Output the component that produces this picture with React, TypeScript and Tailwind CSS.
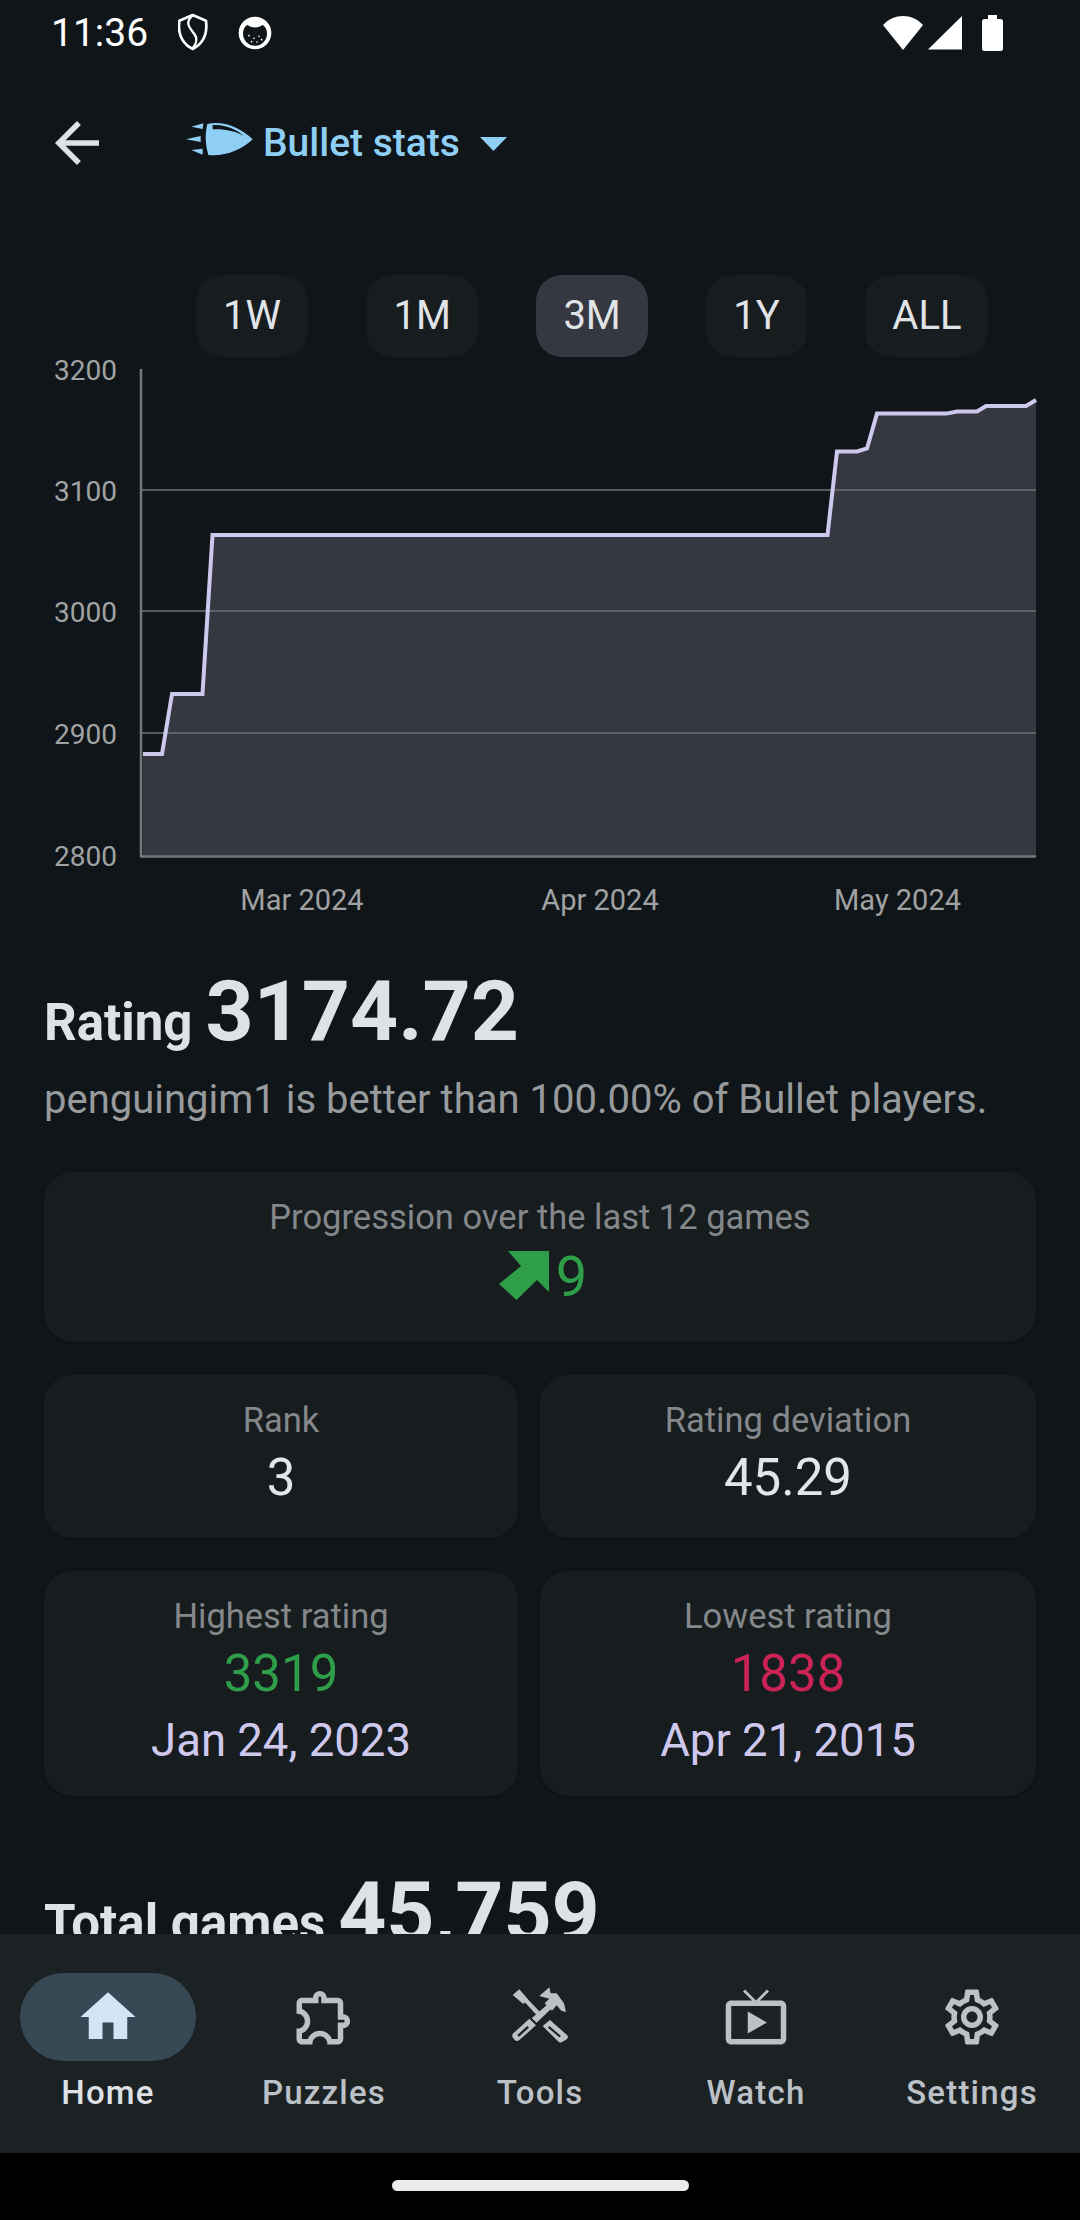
import React from 'react';

const ranges = [
  { label: '1W', active: false },
  { label: '1M', active: false },
  { label: '3M', active: true },
  { label: '1Y', active: false },
  { label: 'ALL', active: false },
];

const linePoints =
  '143,754 162,754 172,694 202.5,694 212.5,535 827.5,535 837,451.5 857,451.5 867,448.5 877,413.6 946,413.6 957,411.5 977,411.5 986,406 1026,406 1036,400';

const StatusBar = () => (
  <div className="h-[66px] flex items-center pl-[51px] text-white">
    <span className="text-[39px] leading-[66px]">11:36</span>
    <svg width="32" height="40" viewBox="56 12 96 120" className="ml-[30px]" fill="none" stroke="white">
      <path d="M100 18 L140 35 C145 75 130 105 100 120 C70 105 55 75 60 35 Z" strokeWidth="8" strokeLinejoin="round" />
      <path d="M100 20 C75 40 90 55 105 75 C120 95 105 110 100 118" strokeWidth="7" />
    </svg>
    <svg width="36" height="36" viewBox="226 16 108 108" className="ml-[27px]">
      <circle cx="280" cy="70" r="49" fill="white" />
      <path d="M244 72 C244 58 249 50 258 45 C266 56 294 56 302 45 C311 50 316 58 316 72 A36 36 0 0 1 244 72 Z" fill="#0f1518" />
      <g fill="white">
        <circle cx="262" cy="78" r="2.5" />
        <circle cx="277" cy="86" r="2.5" />
        <circle cx="292" cy="80" r="2.5" />
        <circle cx="300" cy="90" r="2.5" />
        <circle cx="270" cy="96" r="2.5" />
        <circle cx="286" cy="97" r="2.5" />
      </g>
    </svg>
    <div className="ml-auto mr-[77px] flex items-center">
      <svg width="40" height="34" viewBox="0 0 40 34" fill="white">
        <path d="M0 9 C11 -3 29 -3 40 9 L20 34 Z" />
      </svg>
      <svg width="34" height="34" viewBox="0 0 34 34" fill="white" className="ml-[5px]">
        <path d="M0 33.5 L34 0 V33.5 Z" />
      </svg>
      <svg width="21" height="36" viewBox="0 0 21 36" fill="white" className="ml-[20px]">
        <path d="M6 0 H15 V4 H18.5 A2.5 2.5 0 0 1 21 6.5 V33.5 A2.5 2.5 0 0 1 18.5 36 H2.5 A2.5 2.5 0 0 1 0 33.5 V6.5 A2.5 2.5 0 0 1 2.5 4 H6 Z" />
      </svg>
    </div>
  </div>
);

const AppBar = () => (
  <div className="h-[154px] flex items-center pl-[44px]">
    <svg width="66" height="66" viewBox="0 0 24 24" fill="#dfe2e5">
      <path d="M20 11H7.83l5.59-5.59L12 4l-8 8 8 8 1.41-1.41L7.83 13H20v-2z" />
    </svg>
    <svg width="90" height="60" viewBox="0 0 270 180" className="ml-[60px] mb-[6px]">
      <path d="M112 42 C160 30 215 55 248 88 C215 120 165 140 115 135 C105 100 105 70 112 42 Z" fill="#8fcff5" />
      <path d="M128 45 C165 42 200 58 222 78 C195 62 160 56 128 58 Z" fill="#0f1518" />
      <path d="M64 50 L100 40 L98 57 Z M48 88 L92 78 L92 96 Z M64 120 L98 116 L98 134 Z" fill="#8fcff5" />
    </svg>
    <span className="ml-[3px] text-[39px] font-medium text-[#8fcff5]">Bullet stats</span>
    <svg width="27" height="14" viewBox="0 0 27 14" fill="#8fcff5" className="ml-[20px] mt-[2px]">
      <path d="M0 0 H27 L13.5 14 Z" />
    </svg>
  </div>
);

const RangePicker = () => (
  <div className="mt-[55px] flex gap-[58.5px] pl-[196px]">
    {ranges.map((r) => (
      <div
        key={r.label}
        className={`h-[82px] px-[27px] flex items-center rounded-[26px] text-[40px] text-[#e1e4e7] ${
          r.active ? 'bg-[#353741]' : 'bg-[#171c1f]'
        }`}
      >
        {r.label}
      </div>
    ))}
  </div>
);

const RatingChart = () => (
  <svg width="1080" height="583" viewBox="0 347 1080 583" className="block -mt-[10px]" fontFamily="Roboto, sans-serif">
    <polygon points={`143,856 ${linePoints} 1036,856`} fill="#353741" />
    {[490, 611, 733].map((y) => (
      <line key={y} x1="141" x2="1036" y1={y} y2={y} stroke="#6f7274" strokeWidth="1.5" />
    ))}
    <line x1="141" x2="141" y1="369" y2="857" stroke="#74787a" strokeWidth="2.5" />
    <line x1="140" x2="1036" y1="856.5" y2="856.5" stroke="#74787a" strokeWidth="2.5" />
    <polyline points={linePoints} fill="none" stroke="#cfc8ee" strokeWidth="4" />
    <g fill="#a0a2a3" fontSize="28">
      {[
        ['3200', 380],
        ['3100', 501],
        ['3000', 622],
        ['2900', 744],
        ['2800', 866],
      ].map(([t, y]) => (
        <text key={t} x="117" y={y} textAnchor="end">
          {t}
        </text>
      ))}
      <g fontSize="29">
        <text x="302" y="910" textAnchor="middle">Mar 2024</text>
        <text x="600" y="910" textAnchor="middle">Apr 2024</text>
        <text x="897.5" y="910" textAnchor="middle">May 2024</text>
      </g>
    </g>
  </svg>
);

const Headline = ({ label, value, className }: { label: string; value: string; className: string }) => (
  <div className={`flex items-baseline gap-[13px] text-[#dfe2e5] font-bold ${className}`}>
    <span className="text-[51px] leading-[50px]">{label}</span>
    <span className="text-[84px] leading-[84px]">{value}</span>
  </div>
);

const Card = ({ label, children, className = '' }: { label: string; children: React.ReactNode; className?: string }) => (
  <div className={`bg-[#171c1f] rounded-[28px] pt-[23px] pb-[24px] flex flex-col items-center shadow-sm ${className}`}>
    <div className="text-[34.5px] leading-[44px] text-[#85888b]">{label}</div>
    {children}
  </div>
);

const Value = ({ children, color = 'text-[#e3e6e9]' }: { children: React.ReactNode; color?: string }) => (
  <div className={`text-[51px] leading-[72px] ${color}`}>{children}</div>
);

const Stats = () => (
  <div className="px-[44px] mt-[44px] flex flex-col gap-[33px]">
    <Card label="Progression over the last 12 games" className="h-[170px]">
      <div className="flex items-center gap-[7px] ml-[6px] h-[72px] text-[56px] leading-[72px] text-[#2e9e48]">
        <svg width="50" height="49" viewBox="0 0 50 49" fill="#2e9e48">
          <path d="M9 0 H50 V41 L38 29 L17.5 49 L0 33 L22 15 Z" />
        </svg>
        <span className="mt-[3px]">9</span>
      </div>
    </Card>
    <div className="grid grid-cols-[474px_496px] gap-x-[22px] gap-y-[33px]">
      <Card label="Rank">
        <Value>3</Value>
      </Card>
      <Card label="Rating deviation">
        <Value>45.29</Value>
      </Card>
      <Card label="Highest rating">
        <Value color="text-[#2e9e48]">3319</Value>
        <div className="text-[45.5px] leading-[62px] text-[#cfc8ee]">Jan 24, 2023</div>
      </Card>
      <Card label="Lowest rating">
        <Value color="text-[#cc2356]">1838</Value>
        <div className="text-[45.5px] leading-[62px] text-[#cfc8ee]">Apr 21, 2015</div>
      </Card>
    </div>
  </div>
);

const navItems = [
  {
    label: 'Home',
    active: true,
    icon: <path d="M10 20v-6h4v6h5v-8h3L12 3 2 12h3v8z" />,
  },
  {
    label: 'Puzzles',
    active: false,
    icon: (
      <path d="M10.5 4.5c.28 0 .5.22.5.5v2h6v6h2c.28 0 .5.22.5.5s-.22.5-.5.5h-2v6h-2.12c-.68-1.75-2.39-3-4.38-3s-3.7 1.25-4.38 3H4v-2.12c1.75-.68 3-2.39 3-4.38 0-1.99-1.24-3.7-2.99-4.38L4 7h6V5c0-.28.22-.5.5-.5m0-2C9.12 2.5 8 3.62 8 5H4c-1.1 0-1.99.9-1.99 2v3.8h.29c1.49 0 2.7 1.21 2.7 2.7s-1.21 2.7-2.7 2.7H2V20c0 1.1.9 2 2 2h3.8v-.3c0-1.49 1.21-2.7 2.7-2.7s2.7 1.21 2.7 2.7v.3H17c1.1 0 2-.9 2-2v-4c1.38 0 2.5-1.12 2.5-2.5S20.38 11 19 11V7c0-1.1-.9-2-2-2h-4c0-1.38-1.12-2.5-2.5-2.5z" />
    ),
  },
  { label: 'Tools', active: false, icon: null },
  {
    label: 'Watch',
    active: false,
    icon: (
      <path d="M9 10v8l7-4zm12-4h-7.58l3.29-3.29L16 2l-4 4-4-4-.71.71L10.58 6H3c-1.1 0-2 .89-2 2v12c0 1.1.9 2 2 2h18c1.1 0 2-.9 2-2V8c0-1.11-.9-2-2-2zm0 14H3V8h18v12z" />
    ),
  },
  {
    label: 'Settings',
    active: false,
    icon: (
      <path d="M19.43 12.98c.04-.32.07-.64.07-.98 0-.34-.03-.66-.07-.98l2.11-1.65c.19-.15.24-.42.12-.64l-2-3.46c-.09-.16-.26-.25-.44-.25-.06 0-.12.01-.17.03l-2.49 1c-.52-.4-1.08-.73-1.69-.98l-.38-2.65C14.46 2.18 14.25 2 14 2h-4c-.25 0-.46.18-.49.42l-.38 2.65c-.61.25-1.17.59-1.69.98l-2.49-1c-.06-.02-.12-.03-.18-.03-.17 0-.34.09-.43.25l-2 3.46c-.13.22-.07.49.12.64l2.11 1.65c-.04.32-.07.65-.07.98 0 .33.03.66.07.98l-2.11 1.65c-.19.15-.24.42-.12.64l2 3.46c.09.16.26.25.44.25.06 0 .12-.01.17-.03l2.49-1c.52.4 1.08.73 1.69.98l.38 2.65c.03.24.24.42.49.42h4c.25 0 .46-.18.49-.42l.38-2.65c.61-.25 1.17-.59 1.69-.98l2.49 1c.06.02.12.03.18.03.17 0 .34-.09.43-.25l2-3.46c.12-.22.07-.49-.12-.64l-2.11-1.65zm-1.98-1.71c.04.31.05.52.05.73 0 .21-.02.43-.05.73l-.14 1.13.89.7 1.08.84-.7 1.21-1.27-.51-1.04-.42-.9.68c-.43.32-.84.56-1.25.73l-1.06.43-.16 1.13-.2 1.35h-1.4l-.19-1.35-.16-1.13-1.06-.43c-.43-.18-.83-.41-1.23-.71l-.91-.7-1.06.43-1.27.51-.7-1.21 1.08-.84.89-.7-.14-1.13c-.03-.31-.05-.54-.05-.74s.02-.43.05-.73l.14-1.13-.89-.7-1.08-.84.7-1.21 1.27.51 1.04.42.9-.68c.43-.32.84-.56 1.25-.73l1.06-.43.16-1.13.2-1.35h1.39l.19 1.35.16 1.13 1.06.43c.43.18.83.41 1.23.71l.91.7 1.06-.43 1.27-.51.7 1.21-1.07.85-.89.7.14 1.13zM12 8c-2.21 0-4 1.79-4 4s1.79 4 4 4 4-1.79 4-4-1.79-4-4-4zm0 6c-1.1 0-2-.9-2-2s.9-2 2-2 2 .9 2 2-.9 2-2 2z" />
    ),
  },
];

// crossed hammer and screwdriver, no package has this one
const ToolsIcon = () => (
  <svg width="66" height="66" viewBox="51 12 198 198" fill="#bcc1c7">
    <path d="M68 45 L88 28 L114 58 L100 72 Z" />
    <path d="M100 62 L112 56 L158 104 L148 114 Z" />
    <path d="M125 115 L178 68 L190 80 L140 128 Z" />
    <path d="M148 48 L178 22 L182 40 L200 40 L222 70 L228 96 L214 92 L200 76 L186 92 L164 70 L178 56 Z" />
    <path fillRule="evenodd" d="M118 116 L138 136 L88 180 Q80 186 74 180 L68 172 Q64 166 70 160 Z M112 138 L82 165 L87 170 L117 143 Z" />
    <path fillRule="evenodd" d="M180 120 L232 166 Q236 172 230 178 L216 186 Q210 190 204 184 L158 138 Z M178 138 L174 143 L208 172 L213 168 Z" />
  </svg>
);

const BottomNav = () => (
  <div className="h-[219px] bg-[#1c2124] flex pt-[39px] shrink-0">
    {navItems.map((item) => (
      <div key={item.label} className="w-[216px] flex flex-col items-center">
        <div className={`w-[176px] h-[88px] rounded-full flex items-center justify-center ${item.active ? 'bg-[#374955]' : ''}`}>
          {item.icon ? (
            <svg width="66" height="66" viewBox="0 0 24 24" fill={item.active ? '#d2e6f5' : '#bcc1c7'}>
              {item.icon}
            </svg>
          ) : (
            <ToolsIcon />
          )}
        </div>
        <div
          className={`mt-[12px] text-[33px] leading-[40px] font-medium tracking-[1.2px] ${
            item.active ? 'text-[#dfe2e5]' : 'text-[#bcc1c7]'
          }`}
        >
          {item.label}
        </div>
      </div>
    ))}
  </div>
);

const App = () => {
  return (
    <div className="w-[1080px] h-[2220px] flex flex-col bg-black [font-family:Roboto,sans-serif]">
      <div className="h-[1934px] shrink-0 overflow-hidden bg-[#0f1518]">
        <StatusBar />
        <AppBar />
        <RangePicker />
        <RatingChart />
        <Headline label="Rating" value="3174.72" className="px-[44px] mt-[40px]" />
        <div className="px-[44px] mt-[18px] text-[40px] leading-[56px] text-[#989b9d]">
          penguingim1 is better than 100.00% of Bullet players.
        </div>
        <Stats />
        <Headline label="Total games" value="45,759" className="px-[44px] mt-[75px]" />
      </div>
      <BottomNav />
      <div className="flex-1 flex items-center justify-center pb-[2px]">
        <div className="w-[297px] h-[11px] rounded-full bg-[#ececec]" />
      </div>
    </div>
  );
};

export default App;
